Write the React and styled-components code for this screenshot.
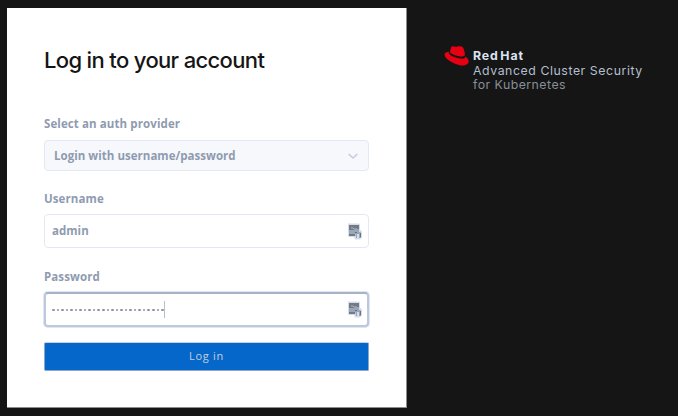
import React from "react";
import styled, { createGlobalStyle } from "styled-components";

const GlobalStyle = createGlobalStyle`
  * { box-sizing: border-box; }
  body { margin: 0; background: #151515; }
`;

const Page = styled.main`
  display: flex;
  align-items: flex-start;
  width: 678px;
  height: 416px;
  padding: 8px 0 0 7px;
  overflow: hidden;
  background: #151515;
  font-family: "Open Sans", sans-serif;
`;

const Card = styled.form`
  display: flex;
  flex-direction: column;
  width: 400px;
  height: 400px;
  padding: 36px 37px 0;
  background: #fff;
  border: solid #8a8d90;
  border-width: 0 1px 1px 0;
`;

const Title = styled.h1`
  margin: 0 0 40px;
  height: 32px;
  font: 500 22px/32px Inter, sans-serif;
  letter-spacing: -0.65px;
  white-space: nowrap;
  color: #151515;
`;

const Label = styled.label`
  height: 16px;
  margin-bottom: ${(p) => p.$gap}px;
  font-size: 11.5px;
  font-weight: 700;
  line-height: 16px;
  letter-spacing: 0.1px;
  color: #8f9bb0;
`;

const Control = styled.div`
  display: flex;
  align-items: center;
  justify-content: space-between;
  width: 325px;
  height: ${(p) => p.$height}px;
  margin-bottom: ${(p) => p.$after}px;
  padding: 0 6px 0 ${(p) => p.$left || 7}px;
  border: 1px solid #e3e8f3;
  border-radius: 4px;
  background: ${(p) => (p.$filled ? "#f6f8fc" : "#fff")};
  ${(p) => p.$focused && `
    border: 2px solid #bdc8dc;
    border-top-color: #a7b3c7;
    padding: 0 5px 0 6px;
    box-shadow: 0 0 0 1px #dfe5f1;
  `}
`;

const Value = styled.span`
  font-size: 11.5px;
  font-weight: 700;
  line-height: 16px;
  letter-spacing: 0.03px;
  color: #8f9bb0;
`;

const Masked = styled.span`
  display: flex;
  align-items: center;
  height: 17px;
  gap: 2px;
  border-right: 1px solid #b3bfd3;
`;

const Dot = styled.i`
  width: 2.56px;
  height: 2px;
  border-radius: 1px;
  background: #8b93a3;
`;

const SubmitButton = styled.button`
  width: 325px;
  height: 29px;
  margin-top: -1px;
  padding: 0 0 2px;
  border: 1px solid #8ba6cb;
  border-top-color: #c3d2e8;
  border-radius: 2px;
  background: #0667cb;
  color: #c3cede;
  font: 400 11px/24px "Open Sans", sans-serif;
  letter-spacing: 0.7px;
`;

const Brand = styled.aside`
  display: flex;
  gap: 4px;
  margin: 38px 0 0 37px;
`;

const BrandText = styled.div`
  padding-top: 3px;
  white-space: nowrap;
`;

const BrandLine = styled.div`
  height: 14.5px;
  font: ${(p) => p.$weight || 400} 12.3px/14.5px Inter, sans-serif;
  letter-spacing: ${(p) => p.$spacing}px;
  color: ${(p) => p.$color};
`;

const HatSvg = styled.svg`
  display: block;
  flex: none;
`;

const Hat = () => (
  <HatSvg width="25" height="20" viewBox="0 0 25 20">
    <path fill="#e60012" d="M7.2 1.100C8 .2 9.300.200 10.500.500c1.200.400 1.900.300 2.800 0 1.500-.600 4.500-.300 5.500.700 1.100 1.100 1.800 4.400 2.200 7.700-1.400 1.700-4.800 1.900-8.300.900C9.400 8.900 6.500 7.700 5.900 6.100z" />
    <path fill="#e60012" d="M5.300 5.800C2.500 6 .4 6.900.5 8.600c.3 4.600 8.500 9.200 15.300 10.600 4.900 1 9.300-.8 8.800-4.200-.2-1.700-1.500-3.400-3.300-4.600.3 1.800-1.400 2.600-4.800 2.200-4.600-.5-10.400-2.700-11.500-5-.2-.6-.1-1.200.3-1.800z" />
  </HatSvg>
);

const Chevron = () => (
  <svg width="18" height="14" viewBox="0 0 18 14" fill="none">
    <path d="m4.700 5 4.300 4 4.300-4" stroke="#c2ccdd" strokeWidth="1.500" />
  </svg>
);

const KeyManager = () => (
  <svg width="14" height="17" viewBox="0 0 14 17">
    <path fill="#d5ddeb" d="M0 .5h11l1 1v5l2 2v6L12 16.500H7L6 14H1l-1-1z" />
    <path fill="#747a82" d="M1 2h10v8H7v3H1z" />
    <path d="M3 5h2l1 1h3M3 10h4" stroke="#aab5c5" fill="none" />
    <path fill="#9aa7ba" d="M1 7h5l1-1h4v3H8v2H1zM7 9h5l1 1v5H8z" />
    <path fill="#d5ddeb" d="M9 11h2v4H9z" />
    <path fill="#6c7178" d="M7 9h2v1H7zM12 10h1v4h-1z" />
  </svg>
);

export default function App() {
  return (
    <>
      <GlobalStyle />
      <Page>
        <Card onSubmit={(e) => e.preventDefault()}>
          <Title>Log in to your account</Title>
          <Label $gap={8}>Select an auth provider</Label>
          <Control $height={31} $after={20} $left={9} $filled>
            <Value>Login with username/password</Value>
            <Chevron />
          </Control>
          <Label $gap={7}>Username</Label>
          <Control $height={34} $after={21}>
            <Value>admin</Value>
            <KeyManager />
          </Control>
          <Label $gap={7}>Password</Label>
          <Control $height={35} $after={16} $focused>
            <Masked>
              {Array.from({ length: 25 }, (_, i) => <Dot key={i} />)}
            </Masked>
            <KeyManager />
          </Control>
          <SubmitButton type="submit">Log in</SubmitButton>
        </Card>
        <Brand>
          <Hat />
          <BrandText>
            <BrandLine $weight={700} $spacing={0.85} $color="#dce4f2">Red&#8202;Hat</BrandLine>
            <BrandLine $spacing={0.57} $color="#b4bfce">Advanced Cluster Security</BrandLine>
            <BrandLine $spacing={0.48} $color="#898f98">for Kubernetes</BrandLine>
          </BrandText>
        </Brand>
      </Page>
    </>
  );
}
